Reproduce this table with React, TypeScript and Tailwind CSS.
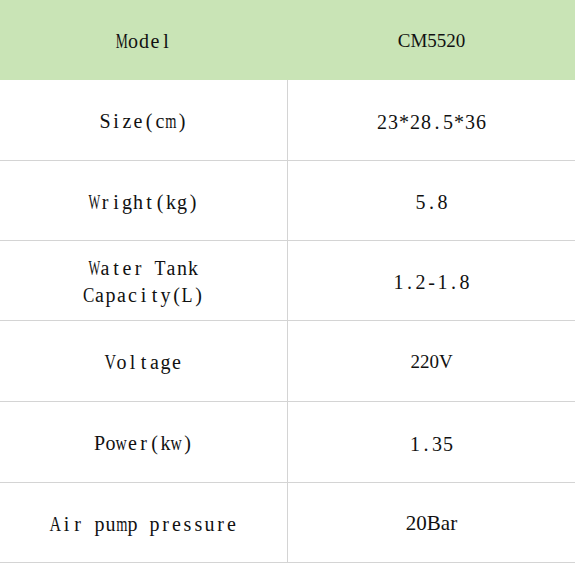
const serif = "font-['Liberation_Serif',serif]";

// Wide serif glyphs are squeezed so each one sits in its half-width cell
const squeeze: Record<string, string> = {
  M: 'scale-x-[0.68]',
  W: 'scale-x-[0.62]',
  m: 'scale-x-[0.72]',
  w: 'scale-x-[0.78]',
  A: 'scale-x-[0.8]',
  V: 'scale-x-[0.8]',
  C: 'scale-x-[0.85]',
  T: 'scale-x-[0.9]',
  L: 'scale-x-[0.9]',
};

function Mono({ text }: { text: string }) {
  return (
    <span className="inline-flex whitespace-pre">
      {text.split('').map((c, i) => (
        <span key={i} className="inline-flex w-[11px] justify-center">
          <span className={`inline-block ${squeeze[c] ?? ''}`}>{c}</span>
        </span>
      ))}
    </span>
  );
}

type Row = {
  label: string[];
  value: string;
  serifValue?: string;
  h: string;
};

const rows: Row[] = [
  { label: ['Size(cm)'], value: '23*28.5*36', h: 'h-[81px]' },
  { label: ['Wright(kg)'], value: '5.8', h: 'h-[80px]' },
  { label: ['Water Tank', 'Capacity(L)'], value: '1.2-1.8', h: 'h-[80px]' },
  { label: ['Voltage'], value: '220V', serifValue: 'text-[19px]', h: 'h-[81px]' },
  { label: ['Power(kw)'], value: '1.35', h: 'h-[81px]' },
  { label: ['Air pump pressure'], value: '20Bar', serifValue: 'text-[21px]', h: 'h-[80px]' },
];

export default function App() {
  return (
    <div className={`w-[575px] h-[564px] bg-white text-[#111] ${serif} text-[20px]`}>
      {/* Header */}
      <div className="flex h-[80px] bg-[#c9e4b6]">
        <div className="w-[288px] flex items-center justify-center pt-[2px]">
          <Mono text="Model" />
        </div>
        <div className="flex-1 flex items-center justify-center pt-[2px] text-[19px]">CM5520</div>
      </div>

      {rows.map((r) => (
        <div key={r.value} className={`flex ${r.h} border-b border-[#d4d4d4]`}>
          <div className="w-[288px] border-r border-[#d4d4d4] flex flex-col items-center justify-center pt-[3px] leading-[27px]">
            {r.label.map((l) => (
              <Mono key={l} text={l} />
            ))}
          </div>
          <div className="flex-1 flex items-center justify-center pt-[3px]">
            {r.serifValue ? <span className={r.serifValue}>{r.value}</span> : <Mono text={r.value} />}
          </div>
        </div>
      ))}
    </div>
  );
}
